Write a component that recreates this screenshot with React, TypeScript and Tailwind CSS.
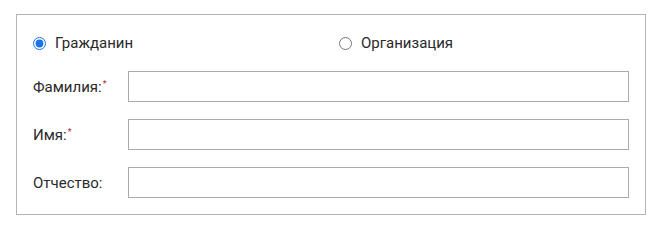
import React from "react";

export default function App() {
  const font = { fontFamily: 'Roboto, "Noto Sans", sans-serif' };
  const rows = [
    { label: "Фамилия:", req: true },
    { label: "Имя:", req: true },
    { label: "Отчество:", req: false },
  ];
  return (
    <div className="w-[660px] h-[230px] bg-white pt-[14px] pl-[16px]" style={font}>
      <div className="w-[630px] h-[201px] border border-[#b4b4b4] px-[16px] pt-[19px] text-[15px] text-[#2a2a2a]">
        <div className="flex items-center h-[18px]">
          <label className="flex items-center w-[306px]">
            <input type="radio" name="t" defaultChecked className="m-0 w-[13px] h-[13px] accent-[#1a73e8]" />
            <span className="ml-[9px] leading-[18px]">Гражданин</span>
          </label>
          <label className="flex items-center">
            <input type="radio" name="t" className="m-0 w-[13px] h-[13px]" />
            <span className="ml-[9px] leading-[18px]">Организация</span>
          </label>
        </div>
        <div className="mt-[19px] flex flex-col gap-[17px]">
          {rows.map((r) => (
            <div key={r.label} className="flex items-center">
              <div className="w-[95px] shrink-0 leading-[18px]">
                {r.label}
                {r.req && <sup className="text-[#b03030] text-[9px] top-[-5px] ml-[1px]">*</sup>}
              </div>
              <input className="w-[501px] h-[31px] border border-[#aaa] bg-white outline-none" />
            </div>
          ))}
        </div>
      </div>
    </div>
  );
}
